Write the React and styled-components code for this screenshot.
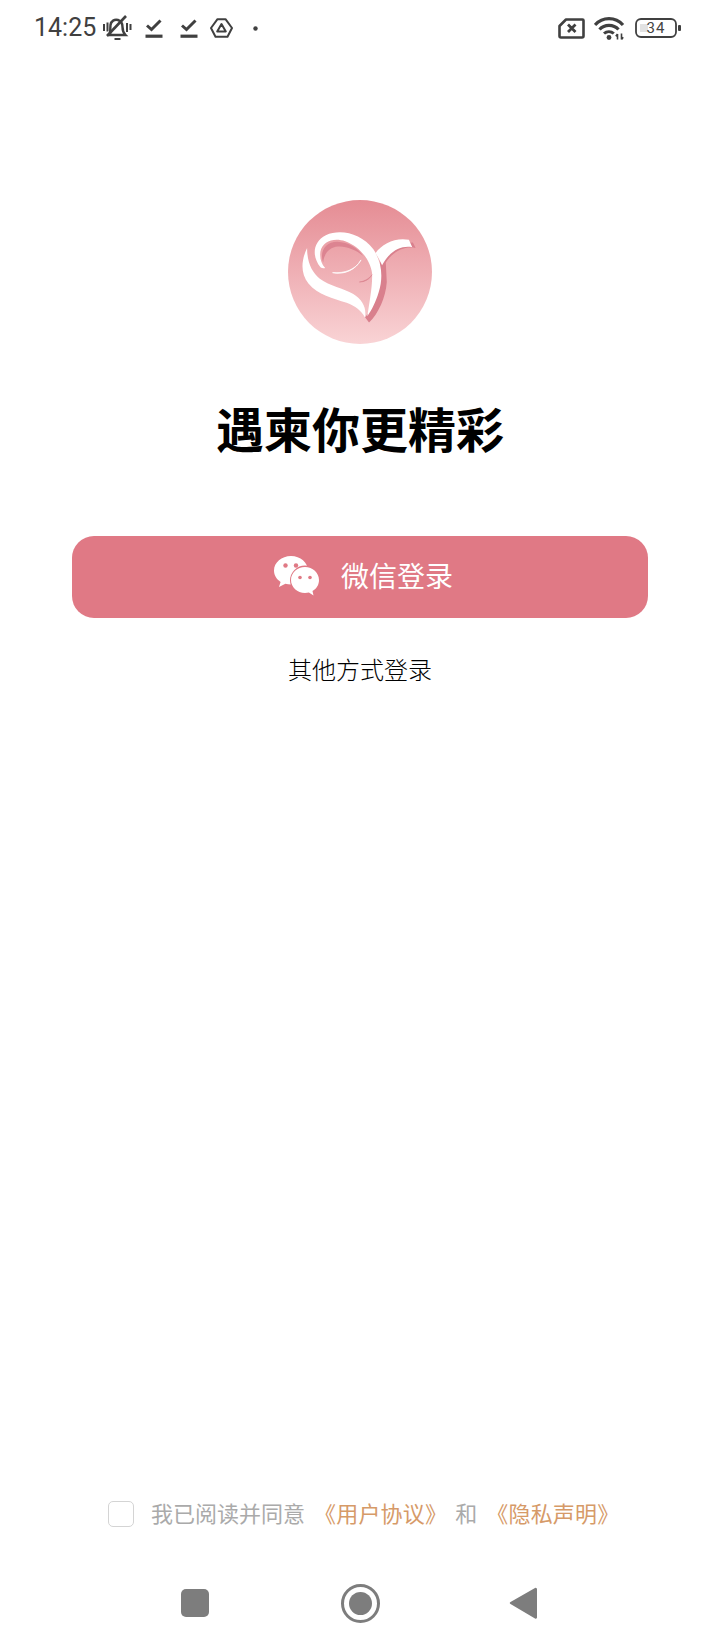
import React from "react";
import styled, { createGlobalStyle } from "styled-components";

const GlobalStyle = createGlobalStyle`
  html, body {
    margin: 0;
    padding: 0;
    background: #fff;
  }
  body {
    font-family: "Noto Sans CJK SC", "Noto Sans", sans-serif;
  }
`;

const Page = styled.div`
  width: 720px;
  height: 1650px;
  display: flex;
  flex-direction: column;
  background: #fff;
  overflow: hidden;
`;

const StatusBar = styled.div`
  height: 56px;
  padding: 0 39px 0 34px;
  display: flex;
  align-items: center;
  justify-content: space-between;
  flex-shrink: 0;
`;

const StatusGroup = styled.div`
  display: flex;
  align-items: center;
`;

const Clock = styled.span`
  font-family: Roboto, sans-serif;
  font-size: 25px;
  line-height: 28px;
  color: #404040;
  width: 63px;
`;

const Slot = styled.span`
  display: flex;
  margin-left: ${({ $left }) => $left}px;
`;

const BatteryBox = styled.span`
  position: relative;
  display: flex;
  width: 46px;
  height: 20px;
  margin-left: 10px;
`;

const BatteryText = styled.span`
  position: absolute;
  left: 0;
  width: 42px;
  top: 0;
  text-align: center;
  font-family: Roboto, sans-serif;
  font-size: 15px;
  line-height: 20px;
  letter-spacing: 1px;
  color: #444;
`;

const Main = styled.main`
  display: flex;
  flex-direction: column;
  align-items: center;
  padding-top: 144px;
`;

const Logo = styled.svg`
  display: block;
  width: 144px;
  height: 144px;
`;

const Title = styled.h1`
  margin: 53px 0 0;
  font-size: 48px;
  line-height: 60px;
  font-weight: 700;
  color: #000;
`;

const WechatButton = styled.button`
  margin-top: 79px;
  width: 576px;
  height: 82px;
  border: 0;
  border-radius: 22px;
  background: #e07985;
  color: #fff;
  font-family: inherit;
  font-size: 28px;
  font-weight: 400;
  display: flex;
  align-items: center;
  justify-content: center;
  gap: 21px;
  padding: 0 0 0 7px;
`;

const ButtonLabel = styled.span`
  margin-bottom: 4px;
`;

const WechatGlyph = styled.svg`
  display: block;
  margin-bottom: 2px;
`;

const OtherLogin = styled.div`
  margin-top: 35px;
  font-size: 24px;
  line-height: 32px;
  font-weight: 300;
  color: #000;
`;

const Footer = styled.footer`
  margin-top: auto;
  flex-shrink: 0;
`;

const Agreement = styled.div`
  height: 28px;
  margin-bottom: 28px;
  padding-left: 108px;
  display: flex;
  align-items: center;
  font-size: 22px;
  color: #aaa;
`;

const Checkbox = styled.span`
  width: 26px;
  height: 26px;
  box-sizing: border-box;
  border: 1.5px solid #d4d4d4;
  border-radius: 5px;
  margin-right: 17px;
`;

const AgreeText = styled.span`
  margin-bottom: 4px;
  margin-left: ${({ $left }) => $left || 0}px;
`;

const AgreeLink = styled.span`
  color: #d69a68;
  letter-spacing: 0.2px;
  margin-bottom: 4px;
  margin-left: ${({ $left }) => $left}px;
`;

const NavBar = styled.nav`
  height: 94px;
  display: grid;
  grid-template-columns: 28px 42px 28px;
  justify-content: space-between;
  align-items: center;
  padding: 0 183px 0 181px;
`;

const NavSquare = styled.span`
  width: 28px;
  height: 28px;
  border-radius: 5px;
  background: #7d7d7d;
`;

const NavHome = styled.span`
  justify-self: end;
  width: 39px;
  height: 39px;
  box-sizing: border-box;
  border: 3.5px solid #7d7d7d;
  border-radius: 50%;
  display: flex;
  align-items: center;
  justify-content: center;
  &::after {
    content: "";
    width: 23px;
    height: 23px;
    border-radius: 50%;
    background: #7d7d7d;
  }
`;

const BellIcon = () => (
  <svg width="30" height="26" viewBox="0 0 30 26" fill="none" stroke="#404040" strokeWidth="2.400">
    <path d="M8 20h15.500c-2-2-3-4.500-3-8 0-3.500-1.500-6-4.500-7-3.500-1-7 1-7.500 5-.3 3.500-.2 7-.5 10z" />
    <path d="M5 21 24 1" strokeWidth="2.600" />
    <path d="M12.500 24h6" strokeWidth="2" />
    <path d="M2 9v7M5.500 7.500v9M25 8v9M28.500 9v6" strokeWidth="2" />
  </svg>
);

const CheckTaskIcon = () => (
  <svg width="18" height="20" viewBox="0 0 18 20" fill="none" stroke="#404040">
    <path d="M2 7.500 6.500 11.500 15.500 2.500" strokeWidth="3" />
    <path d="M0.500 18.200h17" strokeWidth="3.200" />
  </svg>
);

const DriveIcon = () => (
  <svg width="23" height="20" viewBox="0 0 23 20" fill="none" stroke="#404040" strokeLinejoin="round">
    <path d="M7.500 1.200h8L22 10l-4.500 8.800h-12L1 10z" strokeWidth="2" />
    <path d="M11.500 6 15.800 13.500H7.200z" strokeWidth="2" />
  </svg>
);

const SimIcon = () => (
  <svg width="27" height="21" viewBox="0 0 27 21" fill="none" stroke="#404040">
    <path d="M8 1.500h16.500a1 1 0 0 1 1 1V18a1.500 1.500 0 0 1-1.500 1.500H3A1.500 1.500 0 0 1 1.500 18V8z" strokeWidth="2.600" strokeLinejoin="round" />
    <path d="m10 6.500 7.500 7.500M17.500 6.500 10 14" strokeWidth="2.800" />
  </svg>
);

const WifiIcon = () => (
  <svg width="31" height="24" viewBox="0 0 31 24" fill="none" stroke="#404040">
    <path d="M1 9C8.500 .5 21.500 .5 29 9" strokeWidth="3.200" />
    <path d="M5.500 13.500c5-5.500 14-5.500 19 0" strokeWidth="3.200" />
    <path d="M10 17.500c2.800-2.500 7-2.500 9.800 0" strokeWidth="3" />
    <circle cx="15" cy="21.500" r="2.400" fill="#404040" stroke="none" />
    <path d="M23.500 23.500v-5.500M21.800 20.200l1.700-2.200M27.500 17.500v6M29.200 21.300l-1.700 2.200" strokeWidth="1.600" />
  </svg>
);

const BatteryIcon = () => (
  <svg width="46" height="20" viewBox="0 0 46 20" fill="none">
    <rect x="5" y="6" width="8" height="8" fill="#e2e2e2" />
    <rect x="1" y="1" width="40" height="18" rx="5" stroke="#404040" strokeWidth="1.800" />
    <rect x="43" y="7" width="3" height="6" rx="1" fill="#404040" />
  </svg>
);

const LogoMark = () => (
  <Logo viewBox="55 45 430 430">
    <defs>
      <linearGradient id="logoFill" x1="0" y1="0" x2="0" y2="1">
        <stop offset="0" stopColor="#e58c94" />
        <stop offset="1" stopColor="#f9d3d5" />
      </linearGradient>
    </defs>
    <circle cx="270" cy="260" r="215" fill="url(#logoFill)" />
    {/* pink shadows */}
    <path d="M436 188C405 182 372 194 347 232L350 290C347 335 325 385 297 411L285 395C310 370 322 335 325 290L330 230C350 195 395 172 428 172Z" fill="#d9808d" />
    <path d="M160 232C148 198 168 170 202 170C236 172 262 188 280 212C258 194 228 182 204 184C178 186 162 206 160 232Z" fill="#dc8491" />
    {/* leaf */}
    <path d="M112 188C94 226 92 264 116 294C144 328 190 338 230 352C256 362 274 376 285 396C290 368 278 344 250 326C220 308 180 302 150 280C126 260 112 232 112 188Z" fill="#fff" />
    {/* loop and stem */}
    <path d="M152 246C126 214 128 170 168 150C214 130 274 146 310 192C335 230 340 275 326 320C317 350 306 372 292 392C298 350 308 300 306 264C302 226 270 184 226 168C192 156 158 168 152 198C149 218 154 234 166 248C162 250 156 249 152 246Z" fill="#fff" />
    {/* wing */}
    <path d="M316 204C336 176 376 156 416 164L426 186C392 180 358 198 336 240C330 226 323 214 316 204Z" fill="#fff" />
    {/* fine lines */}
    <path d="M188 262C224 270 258 252 273 224C256 254 224 264 188 262Z" fill="#fff" stroke="#fff" strokeWidth="2" />
    <path d="M268 290C282 288 298 280 306 268C298 282 284 290 268 290Z" fill="#d9808d" stroke="#d9808d" strokeWidth="1.500" />
  </Logo>
);

const WechatIcon = () => (
  <WechatGlyph width="46" height="40" viewBox="0 0 46 40">
    <path d="M17 0C7.600 0 0 6.500 0 14.500c0 4.700 2.600 8.800 6.600 11.400L5 31l6.400-3.200c1.800.5 3.700.8 5.600.8 9.400 0 17-6.300 17-14.100S26.400 0 17 0z" fill="#fff" />
    <circle cx="31" cy="24.500" r="15" fill="#e07985" />
    <path d="M31 11c-7.700 0-14 5.700-14 13s6.300 13 14 13c1.400 0 2.700-.2 3.900-.5L39.500 39.500 38.500 35C42.700 32.700 45 28.600 45 24c0-7.300-6.300-13-14-13z" fill="#fff" />
    <circle cx="11.500" cy="9.500" r="2.200" fill="#e07985" />
    <circle cx="22" cy="9.500" r="2.200" fill="#e07985" />
    <circle cx="26" cy="21.500" r="1.800" fill="#e07985" />
    <circle cx="36" cy="21.500" r="1.800" fill="#e07985" />
  </WechatGlyph>
);

const BackIcon = () => (
  <svg width="28" height="32" viewBox="0 0 28 32">
    <path d="M26 1 1.500 15a1.200 1.200 0 0 0 0 2L26 31.500a1.300 1.300 0 0 0 2-1V2a1.300 1.300 0 0 0-2-1z" fill="#7d7d7d" />
  </svg>
);

export default function App() {
  return (
    <Page>
      <GlobalStyle />
      <StatusBar>
        <StatusGroup>
          <Clock>14:25</Clock>
          <Slot $left={5}><BellIcon /></Slot>
          <Slot $left={13}><CheckTaskIcon /></Slot>
          <Slot $left={17}><CheckTaskIcon /></Slot>
          <Slot $left={12}><DriveIcon /></Slot>
          <Slot $left={20}>
            <svg width="5" height="5" viewBox="0 0 5 5"><circle cx="2.500" cy="2.500" r="2.200" fill="#404040" /></svg>
          </Slot>
        </StatusGroup>
        <StatusGroup>
          <SimIcon />
          <Slot $left={9}><WifiIcon /></Slot>
          <BatteryBox>
            <BatteryIcon />
            <BatteryText>34</BatteryText>
          </BatteryBox>
        </StatusGroup>
      </StatusBar>

      <Main>
        <LogoMark />
        <Title>遇柬你更精彩</Title>
        <WechatButton>
          <WechatIcon />
          <ButtonLabel>微信登录</ButtonLabel>
        </WechatButton>
        <OtherLogin>其他方式登录</OtherLogin>
      </Main>

      <Footer>
        <Agreement>
          <Checkbox />
          <AgreeText>我已阅读并同意</AgreeText>
          <AgreeLink $left={9}>《用户协议》</AgreeLink>
          <AgreeText $left={8}>和</AgreeText>
          <AgreeLink $left={9}>《隐私声明》</AgreeLink>
        </Agreement>
        <NavBar>
          <NavSquare />
          <NavHome />
          <BackIcon />
        </NavBar>
      </Footer>
    </Page>
  );
}
